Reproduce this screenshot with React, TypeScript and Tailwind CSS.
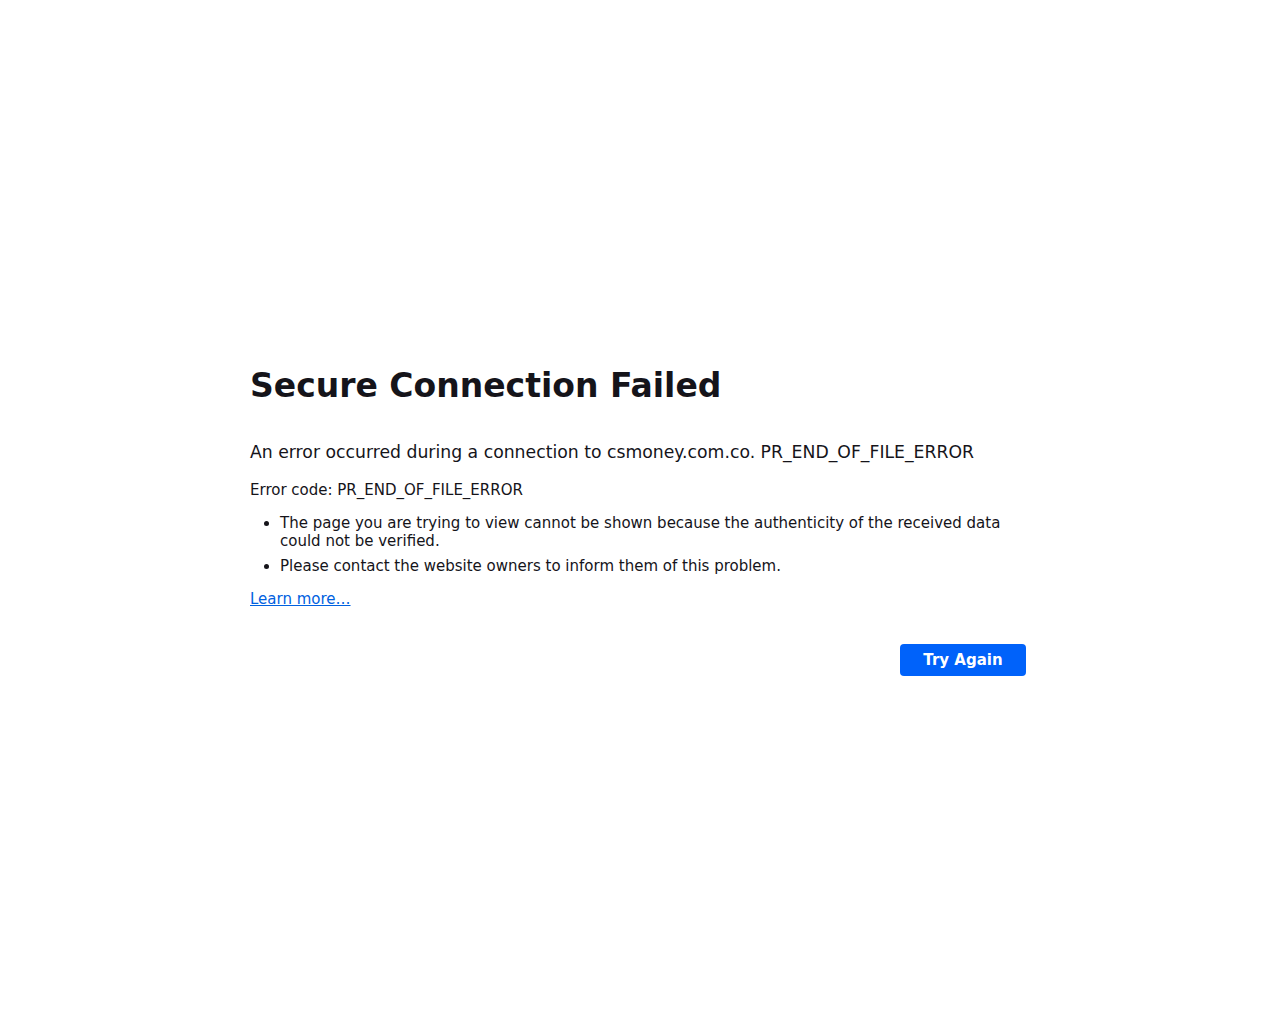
export default function App() {
  return (
    <div className="min-h-[1024px] bg-white text-[#15141a]" style={{ fontFamily: '"DejaVu Sans", sans-serif' }}>
      <div className="ml-[250px] w-[776px] pt-[358px]">
        <h1 className="text-[33px] font-bold leading-[56px]">Secure Connection Failed</h1>
        <p className="mt-[26px] text-[17.25px] leading-[24px]">An error occurred during a connection to csmoney.com.co. PR_END_OF_FILE_ERROR</p>
        <p className="mt-[15px] text-[15px] leading-[22px]">Error code: PR_END_OF_FILE_ERROR</p>
        <ul className="mt-[13px] pl-[30px] text-[15px] leading-[18px] list-disc">
          <li className="pb-[7px]">The page you are trying to view cannot be shown because the authenticity of the received data could not be verified.</li>
          <li>Please contact the website owners to inform them of this problem.</li>
        </ul>
        <a href="#" className="mt-[15px] block w-fit text-[15px] leading-[18px] text-[#0061e0] underline">Learn more…</a>
        <div className="mt-[36px] flex justify-end">
          <button className="h-[32px] w-[126px] rounded-[4px] bg-[#0062fa] text-[15px] font-bold text-white">Try Again</button>
        </div>
      </div>
    </div>
  );
}
